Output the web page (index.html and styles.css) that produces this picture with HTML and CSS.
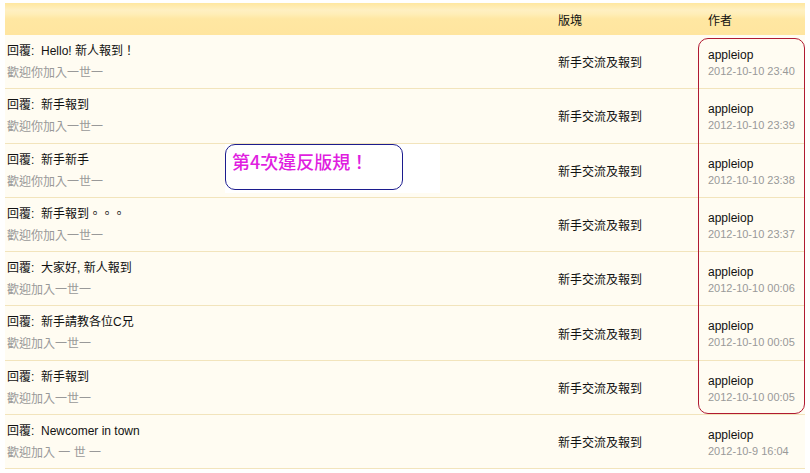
FILE: index.html
```html
<!DOCTYPE html>
<html>
<head>
<meta charset="utf-8">
<link rel="stylesheet" href="styles.css">
</head>
<body>
<div class="page">
  <div class="list">
    <div class="head">
      <div class="c-title"></div>
      <div class="c-forum">版塊</div>
      <div class="c-author">作者</div>
    </div>
    <div class="row">
      <div class="c-title"><div class="t">回覆:&nbsp;&nbsp;Hello! 新人報到！</div><div class="s">歡迎你加入一世一</div></div>
      <div class="c-forum">新手交流及報到</div>
      <div class="c-author"><div class="a">appleiop</div><div class="d">2012-10-10 23:40</div></div>
    </div>
    <div class="row">
      <div class="c-title"><div class="t">回覆:&nbsp;&nbsp;新手報到</div><div class="s">歡迎你加入一世一</div></div>
      <div class="c-forum">新手交流及報到</div>
      <div class="c-author"><div class="a">appleiop</div><div class="d">2012-10-10 23:39</div></div>
    </div>
    <div class="row">
      <div class="c-title"><div class="t">回覆:&nbsp;&nbsp;新手新手</div><div class="s">歡迎你加入一世一</div></div>
      <div class="c-forum">新手交流及報到</div>
      <div class="c-author"><div class="a">appleiop</div><div class="d">2012-10-10 23:38</div></div>
    </div>
    <div class="row">
      <div class="c-title"><div class="t">回覆:&nbsp;&nbsp;新手報到。。。</div><div class="s">歡迎你加入一世一</div></div>
      <div class="c-forum">新手交流及報到</div>
      <div class="c-author"><div class="a">appleiop</div><div class="d">2012-10-10 23:37</div></div>
    </div>
    <div class="row">
      <div class="c-title"><div class="t">回覆:&nbsp;&nbsp;大家好, 新人報到</div><div class="s">歡迎加入一世一</div></div>
      <div class="c-forum">新手交流及報到</div>
      <div class="c-author"><div class="a">appleiop</div><div class="d">2012-10-10 00:06</div></div>
    </div>
    <div class="row">
      <div class="c-title"><div class="t">回覆:&nbsp;&nbsp;新手請教各位C兄</div><div class="s">歡迎加入一世一</div></div>
      <div class="c-forum">新手交流及報到</div>
      <div class="c-author"><div class="a">appleiop</div><div class="d">2012-10-10 00:05</div></div>
    </div>
    <div class="row">
      <div class="c-title"><div class="t">回覆:&nbsp;&nbsp;新手報到</div><div class="s">歡迎加入一世一</div></div>
      <div class="c-forum">新手交流及報到</div>
      <div class="c-author"><div class="a">appleiop</div><div class="d">2012-10-10 00:05</div></div>
    </div>
    <div class="row">
      <div class="c-title"><div class="t">回覆:&nbsp;&nbsp;Newcomer in town</div><div class="s">歡迎加入 一 世 一</div></div>
      <div class="c-forum">新手交流及報到</div>
      <div class="c-author"><div class="a">appleiop</div><div class="d">2012-10-9 16:04</div></div>
    </div>
  </div>
  <div class="patch"></div>
  <div class="note">第4次違反版規！</div>
  <div class="redbox"></div>
</div>
</body>
</html>
```
FILE: styles.css
```css
html, body { margin: 0; padding: 0; background: #ffffff; }
body { width: 810px; height: 473px; overflow: hidden; }
.page {
  position: relative;
  padding: 3px 5px 0 5px;
  font-family: "Liberation Sans", "Noto Sans CJK TC", sans-serif;
  font-size: 12px;
  color: #111;
}
.list { width: 800px; background: #fffcf2; }
.head {
  display: flex;
  height: 32px;
  align-items: center;
  background: linear-gradient(#ffe79f 0%, #fff0c2 22%, #ffeeb8 34%, #ffe7a2 50%, #ffe59f 100%);
}
.head .c-forum { padding-top: 0; }
.row {
  display: flex;
  height: 53.3px;
  border-bottom: 1px solid #f2e4bc;
}
.c-title { width: 550px; padding-left: 2px; box-sizing: border-box; }
.c-forum { width: 150px; padding-left: 3px; box-sizing: border-box; display: flex; align-items: center; }
.c-author { width: 100px; padding-left: 3px; box-sizing: border-box; }
.row .c-title { padding-top: 5px; }
.t { line-height: 22px; height: 22px; white-space: nowrap; }
.s { line-height: 22px; height: 22px; color: #999999; white-space: nowrap; }
.row .c-author { padding-top: 12px; }
.a { line-height: 17px; height: 17px; }
.d { line-height: 15px; font-size: 11px; color: #999999; white-space: nowrap; }
.patch {
  position: absolute;
  left: 225px; top: 144px;
  width: 215px; height: 49px;
  background: #ffffff;
}
.note {
  position: absolute;
  left: 225px; top: 144px;
  width: 176px; height: 44px;
  border: 1px solid #1c1c8e;
  border-radius: 10px;
  background: #ffffff;
  color: #e01ee0;
  font-family: "Noto Sans CJK TC", sans-serif;
  font-size: 18px;
  font-weight: 500;
  line-height: 22px;
  text-indent: 6px;
  padding-top: 5px;
  height: 39px;
}
.redbox {
  position: absolute;
  left: 698px; top: 38px;
  width: 105px; height: 374px;
  border: 1px solid #b01a32;
  border-radius: 10px;
}
```
